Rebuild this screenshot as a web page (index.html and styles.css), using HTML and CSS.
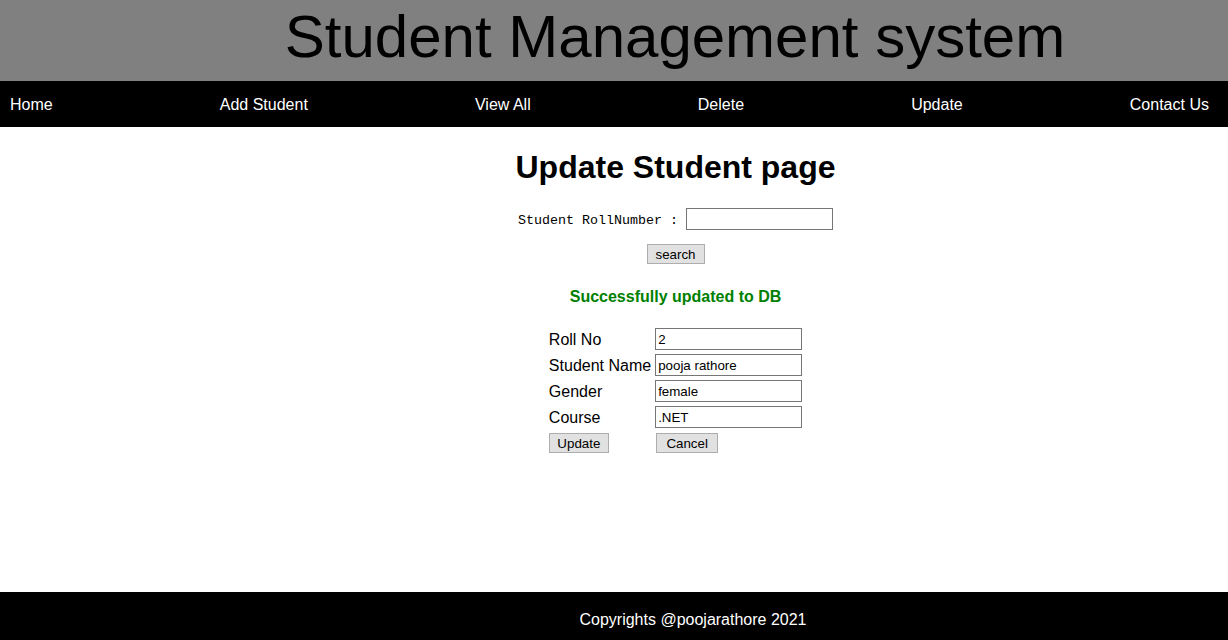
FILE: index.html
```html
<!DOCTYPE html>
<html>
<head>
<meta charset="utf-8">
<title>Update Student</title>
<link rel="stylesheet" href="styles.css">
</head>
<body>
<div class="page">
  <header class="header">
    <div class="title">Student Management system</div>
  </header>
  <nav class="nav">
    <a href="#">Home</a>
    <a href="#">Add Student</a>
    <a href="#">View All</a>
    <a href="#">Delete</a>
    <a href="#">Update</a>
    <a href="#">Contact Us</a>
  </nav>
  <main class="main">
    <h1 class="heading">Update Student page</h1>
    <div class="search-row">
      <label class="mono-label">Student RollNumber :</label>
      <input class="field" type="text">
    </div>
    <div class="search-btn-row">
      <button class="btn btn-search">search</button>
    </div>
    <div class="message">Successfully updated to DB</div>
    <div class="form-grid">
      <label class="lbl">Roll No</label>
      <input class="field" type="text" value="2">
      <label class="lbl">Student Name</label>
      <input class="field" type="text" value="pooja rathore">
      <label class="lbl">Gender</label>
      <input class="field" type="text" value="female">
      <label class="lbl">Course</label>
      <input class="field" type="text" value=".NET">
      <div class="cell"><button class="btn btn-update">Update</button></div>
      <div class="cell"><button class="btn btn-cancel">Cancel</button></div>
    </div>
  </main>
  <footer class="footer">Copyrights @poojarathore 2021</footer>
</div>
</body>
</html>
```

FILE: styles.css
```css
html, body {
  margin: 0;
  padding: 0;
}
body {
  font-family: "Liberation Sans", Arial, sans-serif;
  background: #ffffff;
  color: #000;
}
.page {
  min-height: 640px;
  display: flex;
  flex-direction: column;
}
.header {
  background: #808080;
  height: 81px;
  box-sizing: border-box;
  padding-left: 122px;
  text-align: center;
}
.title {
  font-size: 60px;
  line-height: 74px;
  color: #000;
}
.nav {
  background: #000;
  height: 46px;
  box-sizing: border-box;
  display: flex;
  justify-content: space-between;
  align-items: center;
  padding: 2px 19px 0 10px;
}
.nav a {
  color: #fff;
  text-decoration: none;
  font-size: 16px;
  line-height: 18px;
}
.main {
  flex: 1;
  display: flex;
  flex-direction: column;
  align-items: center;
  padding-left: 123px;
}
.heading {
  font-size: 32px;
  font-weight: bold;
  margin: 22px 0 22px;
  line-height: 37px;
}
.search-row {
  display: flex;
  align-items: center;
  gap: 8px;
  height: 22px;
}
.mono-label {
  font-family: "Liberation Mono", "Courier New", monospace;
  font-size: 13.333px;
  padding-top: 2px;
}
.field {
  box-sizing: border-box;
  width: 147px;
  height: 22px;
  border: 1px solid #767676;
  padding: 1px 2px;
  font-family: "Liberation Sans", Arial, sans-serif;
  font-size: 13.333px;
  margin: 0;
  background: #fff;
}
.search-btn-row {
  margin-top: 14px;
  height: 20px;
}
.btn {
  box-sizing: border-box;
  height: 20px;
  background: #e1e1e1;
  border: 1px solid #adadad;
  font-family: "Liberation Sans", Arial, sans-serif;
  font-size: 13.333px;
  padding: 0 6px;
  margin: 0;
  color: #000;
}
.btn-search { width: 58px; }
.btn-update { width: 60px; }
.btn-cancel { width: 62px; margin-left: 1px; }
.message {
  color: #008000;
  font-weight: bold;
  font-size: 16px;
  line-height: 18px;
  margin-top: 24px;
}
.form-grid {
  margin-top: 22px;
  display: grid;
  grid-template-columns: auto 147px;
  column-gap: 4px;
  row-gap: 4px;
  align-items: center;
}
.lbl {
  font-size: 16px;
  line-height: 18px;
  padding-top: 2px;
}
.cell {
  padding-top: 1px;
  height: 22px;
  box-sizing: border-box;
}
.footer {
  background: #000;
  color: #fff;
  height: 48px;
  box-sizing: border-box;
  padding: 19px 0 0 158px;
  text-align: center;
  font-size: 16px;
  line-height: 18px;
}
```
